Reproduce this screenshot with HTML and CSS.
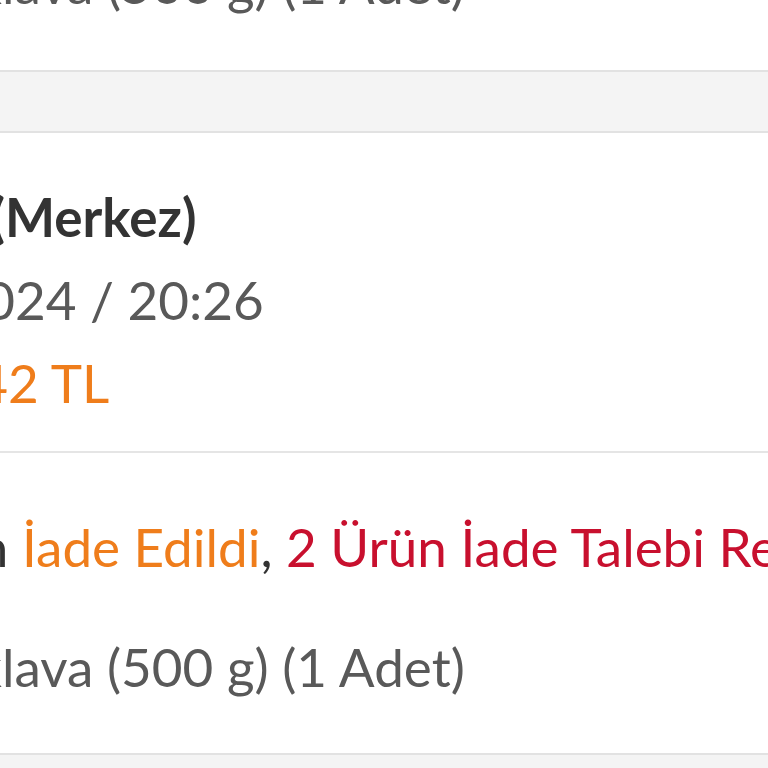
FILE: index.html
```html
<!DOCTYPE html>
<html lang="tr">
<head>
<meta charset="utf-8">
<title>Siparişlerim</title>
<link rel="stylesheet" href="styles.css">
</head>
<body>
<div class="page">
  <section class="card card-prev">
    <div class="sec sec-items">
      <p class="line muted pad-item"><span class="pre"><span>Fıstıklı Bak</span></span>lava (500 g) (1 Adet)</p>
    </div>
  </section>
  <section class="card">
    <div class="sec sec-info">
      <p class="line strong pad-store"><span class="pre"><span>Kadıköy Şube (</span></span>Merkez)</p>
      <p class="line muted pad-date"><span class="pre"><span>12.05.20</span></span>24 / 20:26</p>
      <p class="line orange pad-total"><span class="pre"><span>1.24</span></span>2 TL</p>
    </div>
    <div class="sec sec-items">
      <p class="line status pad-status"><span class="pre"><span>1 Ürün </span></span><span class="orange">İade Edildi</span>, <span class="red">2 Ürün İade Talebi Reddedildi</span></p>
      <p class="line muted pad-item"><span class="pre"><span>Fıstıklı Bak</span></span>lava (500 g) (1 Adet)</p>
    </div>
  </section>
</div>
</body>
</html>
```
FILE: styles.css
```css
html, body {
  margin: 0;
  padding: 0;
  background: #f4f4f4;
  font-family: Lato, "Noto Sans", sans-serif;
  overflow: hidden;
}
.page {
  margin-top: -58px;
  width: 768px;
}
.card {
  background: #fff;
  border-top: 2px solid #e2e2e2;
  border-bottom: 2px solid #e2e2e2;
}
.card-prev {
  border-top: none;
  margin-bottom: 59px;
}
.sec + .sec {
  border-top: 2px solid #e5e5e5;
}
.sec-info {
  padding: 42px 0 27px;
}
.sec-items {
  padding: 52px 0 45px;
  display: flex;
  flex-direction: column;
  gap: 37px;
}
.card-prev .sec-items {
  padding-top: 0;
}
.line {
  margin: 0;
  font-size: 53px;
  line-height: 83px;
  white-space: nowrap;
  overflow: hidden;
}
.pre {
  display: inline-flex;
  width: 0;
  justify-content: flex-end;
}
.pre > span {
  white-space: pre;
  flex: none;
}
.strong { color: #333; font-weight: 700; }
.muted { color: #595959; }
.orange { color: #ef7d1b; }
.red { color: #c8102e; }
.status { color: #333; }
.pad-store { padding-left: 5px; }
.pad-date { padding-left: 15px; }
.pad-total { padding-left: 8px; }
.pad-status { padding-left: 22px; }
.pad-item { padding-left: 2px; }
```
